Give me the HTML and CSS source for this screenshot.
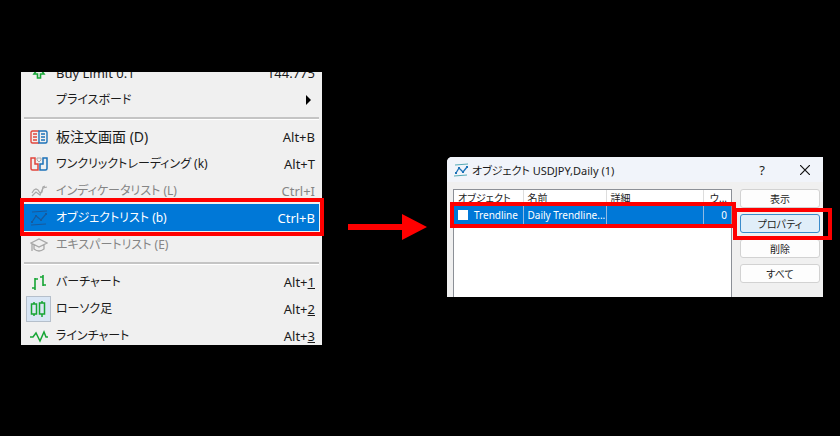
FILE: index.html
```
<!DOCTYPE html>
<html lang="ja">
<head>
  <meta charset="UTF-8" />
  <meta name="viewport" content="width=device-width, initial-scale=1" />
  <title>オブジェクトリスト</title>
  <link rel="stylesheet" href="styles.css">
</head>
<body>

  <main class="steps">
    <div class="menu-wrap">
      <nav class="menu">
        <ul>
          <li>
            <svg class="icon" viewBox="0 0 18 16" fill="none" stroke="#16a534" stroke-width="1.6"><path d="M9 2l5 7h-3.500v4h-3V9H4z" /></svg>
            <span class="label latin">Buy Limit 0.1</span><span class="key">144.775</span>
          </li>
          <li>
            <span class="icon"></span>
            <span class="label">プライスボード</span>
            <svg class="more" viewBox="0 0 5 10"><path d="M0 0l5 5-5 5z" /></svg>
          </li>
          <li class="separator"></li>
          <li>
            <svg class="icon" viewBox="0 0 18 16" fill="none" stroke-width="1.4">
              <path d="M9 2H2.500Q1 2 1 3.500V12.500Q1 14 2.500 14H9M3 5h4M3 8h4M3 11h4" stroke="#e0453c" />
              <path d="M9 2h6.500Q17 2 17 3.500V12.500Q17 14 15.500 14H9zM11 5h4M11 8h4M11 11h4" stroke="#1c72b8" />
            </svg>
            <span class="label kanji">板注文画面 (D)</span><span class="key">Alt+B</span>
          </li>
          <li>
            <svg class="icon" viewBox="0 0 18 16" fill="none" stroke-width="1.5">
              <path d="M1 2h4v6h3v6H2.500Q1 14 1 12.500z" stroke="#e0453c" />
              <path d="M17 2h-4v6h-3v6h5.500q1.500 0 1.500-1.500z" stroke="#1c72b8" />
              <path d="M7 2h4v2L9 6 7 4z" stroke="#aaa" stroke-width="1" />
            </svg>
            <span class="label">ワンクリックトレーディング (k)</span><span class="key">Alt+T</span>
          </li>
          <li class="disabled">
            <svg class="icon" viewBox="0 0 18 16" fill="none" stroke="#a8a8a8" stroke-width="1.2">
              <path d="M2 13l4-4 4 3 3-7 4-1" />
              <path d="M2 10l2-3 2-1 2 1 2 3 2-1 1-5 2-1" />
            </svg>
            <span class="label">インディケータリスト (L)</span><span class="key">Ctrl+I</span>
          </li>
          <li class="selected">
            <svg class="icon" viewBox="0 0 18 16" fill="none" stroke="#17599c" stroke-width="1.2">
              <path d="M2 2l15-1M1 15l15-1M2 12l4-6 5 4 5-6" />
              <path d="M5 6h2M10 10h2M15 4h2M1 12h2" stroke-width="2" />
            </svg>
            <span class="label">オブジェクトリスト (b)</span><span class="key">Ctrl+B</span>
          </li>
          <li class="disabled">
            <svg class="icon" viewBox="0 0 18 16" fill="none" stroke="#a8a8a8" stroke-width="1.3">
              <path d="M1 6l8-4 8 4-8 4zM4 8v4q5 4 10 0V8M2 7v7" />
            </svg>
            <span class="label">エキスパートリスト (E)</span><span class="key"></span>
          </li>
          <li class="separator"></li>
          <li>
            <svg class="icon" viewBox="0 0 18 16" fill="none" stroke="#16a534" stroke-width="1.6">
              <path d="M5 4v12M2 14h3M5 5h3M13 1v11M10 3h3M13 11h3" />
            </svg>
            <span class="label">バーチャート</span><span class="key">Alt+<u>1</u></span>
          </li>
          <li class="checked">
            <svg class="icon" viewBox="0 0 18 18" fill="none" stroke="#16a534" stroke-width="1.5">
              <path d="M2 4h5v10H2zM10 3h5v11h-5zM4.500 2v2M4.500 14v2M12.500 1v2M12.500 14v3" />
            </svg>
            <span class="label">ローソク足</span><span class="key">Alt+<u>2</u></span>
          </li>
          <li>
            <svg class="icon" viewBox="0 0 18 16" fill="none" stroke="#16a534" stroke-width="1.5">
              <path d="M0 9h3l3-4 4 8 4-9 2 5h2" />
            </svg>
            <span class="label">ラインチャート</span><span class="key">Alt+<u>3</u></span>
          </li>
        </ul>
      </nav>
      <div class="mark mark-menu"></div>
    </div>

    <svg class="arrow" viewBox="0 0 79 26" fill="#f00"><path d="M0 10h54V0l25 13-25 13V16H0z" /></svg>

    <section class="dialog">
      <header class="dialog-title">
        <svg class="title-icon" viewBox="0 0 14 14" fill="none" stroke="#1c72b8">
          <path d="M1 2l13-1M0 13l13-1" stroke="#55a9b5" />
          <path d="M2 10l3-5 4 4 4-5" stroke-width="1.3" />
          <path d="M1 10h2M4 5h2M8 9h2M12 4h2" stroke-width="2" />
        </svg>
        <h1>オブジェクト USDJPY,Daily (1)</h1>
        <button class="title-btn" aria-label="ヘルプ">?</button>
        <button class="title-btn" aria-label="閉じる">
          <svg viewBox="0 0 10 10" width="10" height="10" stroke="#111" stroke-width="1.2"><path d="M0 0l10 10M10 0L0 10" /></svg>
        </button>
      </header>
      <div class="dialog-body">
        <div class="list">
          <table>
            <colgroup><col class="col-object"><col class="col-name"><col><col class="col-window"></colgroup>
            <thead>
              <tr><th>オブジェクト</th><th>名前</th><th>詳細</th><th class="num">ウ...</th></tr>
            </thead>
            <tbody>
              <tr>
                <td><label><input type="checkbox">Trendline</label></td>
                <td>Daily Trendline...</td>
                <td></td>
                <td class="num">0</td>
              </tr>
            </tbody>
          </table>
          <div class="mark mark-row"></div>
        </div>
        <div class="actions">
          <button>表示</button>
          <div class="action-marked">
            <button class="focused">プロパティ</button>
            <div class="mark mark-button"></div>
          </div>
          <button>削除</button>
          <button>すべて</button>
        </div>
      </div>
    </section>
  </main>

</body>
</html>
```

FILE: styles.css
```
* {
  box-sizing: border-box;
  margin: 0;
  padding: 0;
}

body {
  background-color: #000;
  color: #1b1b1b;
  font-family: "Noto Sans", "Noto Sans CJK JP", sans-serif;
  font-size: 13px;
  font-feature-settings: "palt";
}

.steps {
  display: grid;
  grid-template-columns: minmax(0, 301fr) 125px minmax(0, 376fr);
  align-items: start;
  padding: 72px 17px 0 21px;
}

/* Menu */
.menu-wrap {
  position: relative;
}

.menu {
  height: 273px;
  overflow: hidden;
  background-color: #f0f0f0;
}

.menu ul {
  list-style: none;
  margin-top: -13px;
  padding: 0 3px;
}

.menu li {
  display: flex;
  align-items: center;
  height: 27px;
  padding: 0 4px 0 6px;
  line-height: 20px;
  white-space: nowrap;
}

.menu li.separator {
  height: 10px;
  padding: 0;
}

.separator::before {
  content: "";
  flex: 1;
  height: 2px;
  background-color: #c4c4c4;
  border-bottom: 1px solid #fff;
}

.icon {
  width: 18px;
  height: 16px;
  margin-right: 8px;
  flex-shrink: 0;
}

.label {
  flex: 1;
  font-size: 12px;
}

.label.latin {
  font-size: 13px;
}

.label.kanji {
  font-size: 14px;
}

.more {
  width: 5px;
  height: 10px;
  margin-right: 4px;
}

.menu .disabled {
  color: #858585;
}

.menu .selected {
  background-color: #0078d7;
  color: #fff;
}

.checked .icon {
  width: 25px;
  height: 26px;
  margin: 0 5px 0 -4px;
  padding: 3px 2px;
  background-color: #d9e6f5;
  border: 1px solid #b5bfcb;
}

/* Red frames */
.mark {
  position: absolute;
  border: 4px solid #f00;
  pointer-events: none;
}

.mark-menu {
  top: 126px;
  right: -2px;
  left: -1px;
  height: 38px;
}

.mark-row {
  top: 12px;
  right: -5px;
  left: -4px;
  height: 26px;
}

.mark-button {
  top: -6px;
  right: -12px;
  bottom: -7px;
  left: -7px;
}

.arrow {
  width: 79px;
  height: 26px;
  margin: 142px 0 0 26px;
}

/* Dialog */
.dialog {
  height: 140px;
  margin-top: 85px;
  display: flex;
  flex-direction: column;
  background-color: #f0f0f0;
  border-radius: 5px 0 0 0;
  font-size: 10px;
}

.dialog-title {
  display: flex;
  align-items: center;
  height: 25px;
  padding: 0 3px 0 7px;
  background-color: #f1f4fa;
  border-radius: 5px 0 0 0;
}

.title-icon {
  width: 14px;
  height: 14px;
  margin-right: 4px;
}

.dialog-title h1 {
  flex: 1;
  font-size: 11px;
  font-weight: 400;
  white-space: nowrap;
}

.title-btn {
  width: 30px;
  height: 24px;
  margin-left: 13px;
  background: none;
  border: none;
  color: #1b1b1b;
  font: inherit;
  font-size: 13px;
}

.dialog-body {
  flex: 1;
  display: flex;
  gap: 8px;
  padding: 7px 3px 0 6px;
}

.list {
  position: relative;
  flex: 1;
  border: 1px solid #8c9097;
  border-bottom: none;
  background-color: #fff;
}

.list table {
  width: 100%;
  table-layout: fixed;
  border-collapse: collapse;
}

.col-object {
  width: 69px;
}

.col-name {
  width: 83px;
}

.col-window {
  width: 28px;
}

.list th,
.list td {
  height: 16px;
  padding: 0 4px;
  border-right: 1px solid #ddd;
  font-weight: 400;
  line-height: 15px;
  text-align: left;
  white-space: nowrap;
}

.list td {
  height: 18px;
  background-color: #0078d7;
  border-right-color: #8fb9e3;
  color: #fff;
}

.list .num {
  border-right: none;
  text-align: right;
}

.list label {
  display: flex;
  align-items: center;
  gap: 6px;
}

.list input {
  appearance: none;
  flex-shrink: 0;
  width: 10px;
  height: 10px;
  background-color: #fff;
}

.actions {
  width: 80px;
  display: flex;
  flex-direction: column;
  gap: 6px;
}

.actions button {
  display: block;
  width: 100%;
  height: 19px;
  background-color: #fdfdfd;
  border: 1px solid #d2d2d2;
  border-radius: 3px;
  color: #1b1b1b;
  font: inherit;
  font-feature-settings: "palt";
  line-height: 16px;
}

.actions .focused {
  background-color: #e0eef9;
  border-color: #3a8bcb;
}

.action-marked {
  position: relative;
}
```
